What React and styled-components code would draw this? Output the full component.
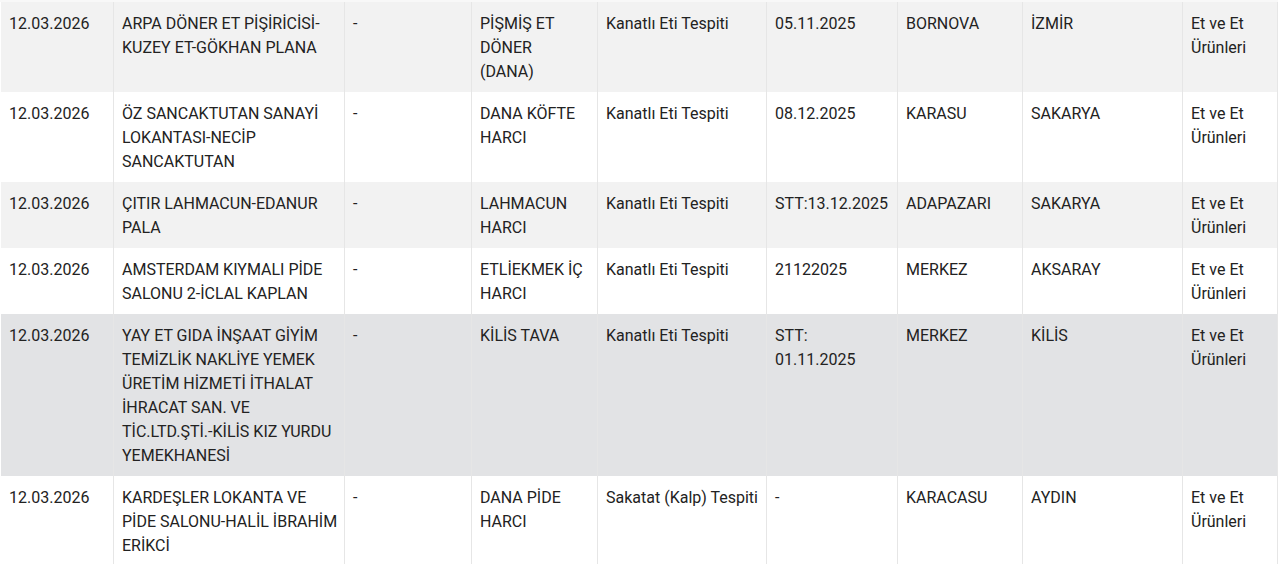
import React from "react";
import styled, { createGlobalStyle } from "styled-components";

const Global = createGlobalStyle`
  html, body { margin: 0; padding: 0; background: #ffffff; }
  body { font-family: Roboto, "Liberation Sans", Arial, sans-serif; }
`;

const Table = styled.table`
  width: 1277px;
  table-layout: fixed;
  border-collapse: collapse;
  border-top: 2px solid #f8f8f8;
  font-family: Roboto, "Liberation Sans", Arial, sans-serif;
  font-size: 16px;
  line-height: 24px;
  color: #222222;
`;

const Row = styled.tr`
  background: ${(p) => (p.$hover ? "#e2e3e5" : p.$odd ? "#f2f2f2" : "#ffffff")};
`;

const Cell = styled.td`
  vertical-align: top;
  padding: 10px ${(p) => (p.$wide ? "4px" : "8px")} 8px 8px;
  border-left: 1px solid #ffffff;
  border-right: 1px solid #e6e6e6;
  word-wrap: break-word;
`;

const widths = [113, 231, 127, 126, 169, 131, 125, 160, 95];

const rows = [
  ["12.03.2026", "ARPA DÖNER ET PİŞİRİCİSİ-KUZEY ET-GÖKHAN PLANA", "-", "PİŞMİŞ ET DÖNER (DANA)", "Kanatlı Eti Tespiti", "05.11.2025", "BORNOVA", "İZMİR", "Et ve Et Ürünleri"],
  ["12.03.2026", "ÖZ SANCAKTUTAN SANAYİ LOKANTASI-NECİP SANCAKTUTAN", "-", "DANA KÖFTE HARCI", "Kanatlı Eti Tespiti", "08.12.2025", "KARASU", "SAKARYA", "Et ve Et Ürünleri"],
  ["12.03.2026", "ÇITIR LAHMACUN-EDANUR PALA", "-", "LAHMACUN HARCI", "Kanatlı Eti Tespiti", "STT:13.12.2025", "ADAPAZARI", "SAKARYA", "Et ve Et Ürünleri"],
  ["12.03.2026", "AMSTERDAM KIYMALI PİDE SALONU 2-İCLAL KAPLAN", "-", "ETLİEKMEK İÇ HARCI", "Kanatlı Eti Tespiti", "21122025", "MERKEZ", "AKSARAY", "Et ve Et Ürünleri"],
  ["12.03.2026", "YAY ET GIDA İNŞAAT GİYİM TEMİZLİK NAKLİYE YEMEK ÜRETİM HİZMETİ İTHALAT İHRACAT SAN. VE TİC.LTD.ŞTİ.-KİLİS KIZ YURDU YEMEKHANESİ", "-", "KİLİS TAVA", "Kanatlı Eti Tespiti", "STT: 01.11.2025", "MERKEZ", "KİLİS", "Et ve Et Ürünleri"],
  ["12.03.2026", "KARDEŞLER LOKANTA VE PİDE SALONU-HALİL İBRAHİM ERİKCİ", "-", "DANA PİDE HARCI", "Sakatat (Kalp) Tespiti", "-", "KARACASU", "AYDIN", "Et ve Et Ürünleri"],
];

export default function App() {
  return (
    <>
      <Global />
      <Table>
        <colgroup>
          {widths.map((w, i) => (
            <col key={i} style={{ width: w }} />
          ))}
        </colgroup>
        <tbody>
          {rows.map((r, i) => (
            <Row key={i} $odd={i % 2 === 0} $hover={i === 4}>
              {r.map((c, j) => (
                <Cell key={j} $wide={j === 1}>{c}</Cell>
              ))}
            </Row>
          ))}
        </tbody>
      </Table>
    </>
  );
}
